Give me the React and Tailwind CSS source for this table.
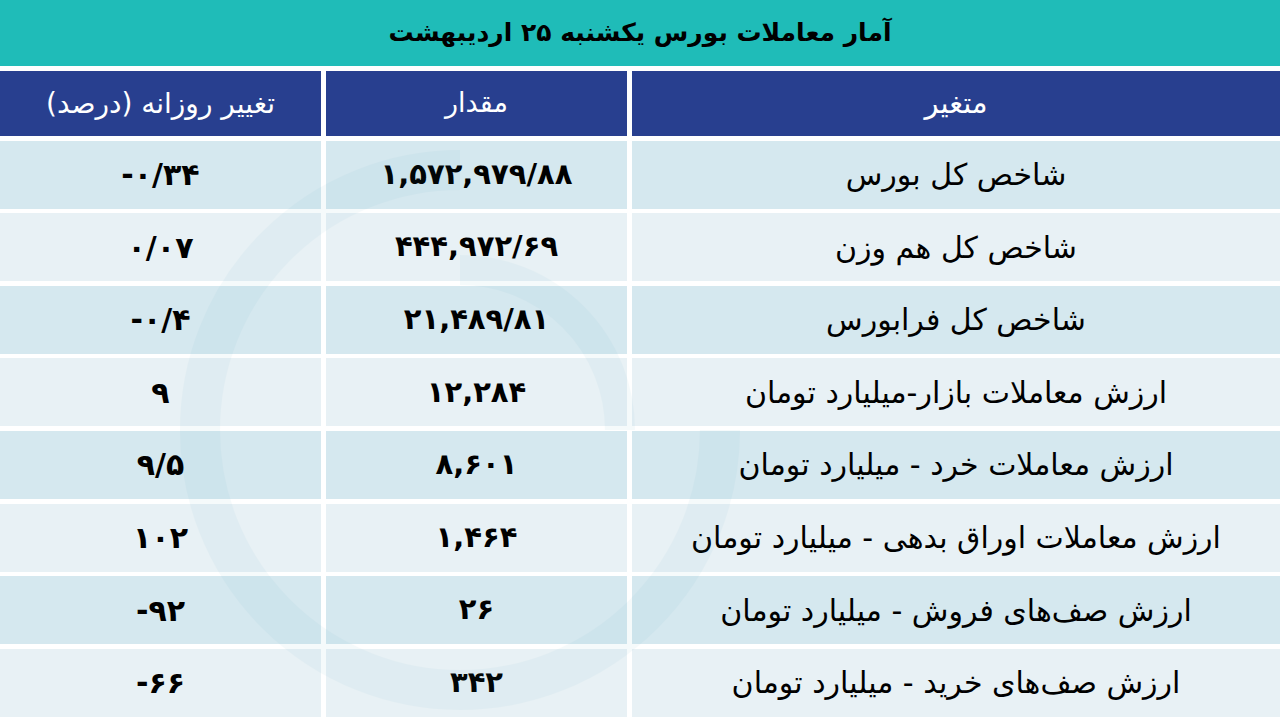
import React from 'react'

const rows = [
  { name: 'شاخص کل بورس', value: '۱,۵۷۲,۹۷۹/۸۸', change: '-۰/۳۴' },
  { name: 'شاخص کل هم وزن', value: '۴۴۴,۹۷۲/۶۹', change: '۰/۰۷' },
  { name: 'شاخص کل فرابورس', value: '۲۱,۴۸۹/۸۱', change: '-۰/۴' },
  { name: 'ارزش معاملات بازار-میلیارد تومان', value: '۱۲,۲۸۴', change: '۹' },
  { name: 'ارزش معاملات خرد - میلیارد تومان', value: '۸,۶۰۱', change: '۹/۵' },
  { name: 'ارزش معاملات اوراق بدهی - میلیارد تومان', value: '۱,۴۶۴', change: '۱۰۲' },
  { name: 'ارزش صف‌های فروش - میلیارد تومان', value: '۲۶', change: '-۹۲' },
  { name: 'ارزش صف‌های خرید - میلیارد تومان', value: '۳۴۲', change: '-۶۶' },
]

export default function App() {
  return (
    <div className="relative w-[1280px] h-[717px] overflow-hidden bg-white font-['DejaVu_Sans',sans-serif]" dir="rtl">
      <div className="h-[66px] bg-[#1fbcb8] flex items-center justify-center">
        <h1 className="text-[25px] font-bold text-black">آمار معاملات بورس یکشنبه ۲۵ اردیبهشت</h1>
      </div>

      <div className="mt-[5px] grid grid-cols-[648px_301px_1fr] gap-x-[5px] gap-y-[4.6px]">
        <div className="h-[65px] bg-[#283f8f] text-white text-[29px] flex items-center justify-center">متغیر</div>
        <div className="h-[65px] bg-[#283f8f] text-white text-[27px] flex items-center justify-center">مقدار</div>
        <div className="h-[65px] bg-[#283f8f] text-white text-[28px] flex items-center justify-center">تغییر روزانه (درصد)</div>

        {rows.map((row, i) => {
          const bg = i % 2 === 0 ? 'bg-[#d5e8ef]' : 'bg-[#e8f1f5]'
          return (
            <React.Fragment key={i}>
              <div className={`h-[68px] ${bg} flex items-center justify-center text-[30px] text-black`}>
                {row.name}
              </div>
              <div className={`h-[68px] ${bg} flex items-center justify-center text-[29px] font-bold text-black`} dir="ltr">
                {row.value}
              </div>
              <div className={`h-[68px] ${bg} flex items-center justify-center text-[30px] font-bold text-black`} dir="ltr">
                {row.change}
              </div>
            </React.Fragment>
          )
        })}
      </div>

      {/* faint watermark */}
      <svg className="absolute left-[180px] top-[150px] pointer-events-none opacity-[0.04]" width="560" height="560" viewBox="0 0 560 560">
        <path d="M280 20 A260 260 0 1 0 540 280" fill="none" stroke="#2a8fb0" strokeWidth="40" />
        <path d="M280 120 A160 160 0 0 1 440 280" fill="none" stroke="#2a8fb0" strokeWidth="30" />
      </svg>
    </div>
  )
}
